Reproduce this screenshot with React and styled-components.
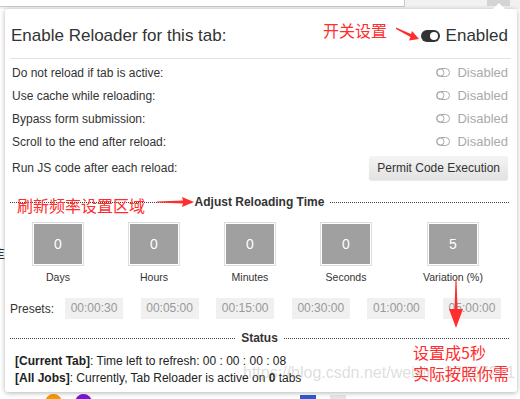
import React from "react";
import styled, { createGlobalStyle } from "styled-components";

const GlobalStyle = createGlobalStyle`
  html, body {
    margin: 0;
    padding: 0;
    background: #ffffff;
  }
  body {
    font-family: "Liberation Sans", Arial, sans-serif;
    color: #333;
  }
`;

const ToggleOn = () => (
  <svg width="19" height="12" viewBox="0 0 19 12">
    <rect x="0" y="0" width="19" height="12" rx="6" fill="#333" />
    <circle cx="13" cy="6" r="4" fill="#fff" />
  </svg>
);

const ToggleOff = () => (
  <svg width="14" height="9" viewBox="0 0 14 9">
    <rect x="0.5" y="0.5" width="13" height="8" rx="4" fill="none" stroke="#aaa" />
    <circle cx="4.5" cy="4.5" r="3.5" fill="none" stroke="#aaa" />
  </svg>
);

const options = [
  "Do not reload if tab is active:",
  "Use cache while reloading:",
  "Bypass form submission:",
  "Scroll to the end after reload:",
];

const timers = [
  { value: "0", label: "Days" },
  { value: "0", label: "Hours" },
  { value: "0", label: "Minutes" },
  { value: "0", label: "Seconds" },
  { value: "5", label: "Variation (%)" },
];

const presets = ["00:00:30", "00:05:00", "00:15:00", "00:30:00", "01:00:00", "05:00:00"];

const App = () => {
  return (
    <Page>
      <GlobalStyle />
      <Toolbar>
        <AddressBox />
        <ExtButton />
      </Toolbar>
      <EdgeGlyph>隹</EdgeGlyph>
      <BottomDots>
        <Dot color="#f59a00" left="45px" />
        <Dot color="#7a16d8" left="75px" />
        <Square color="#2d5bd0" left="300px" />
        <Square color="#e6e6e6" left="330px" />
      </BottomDots>

      <Popup>
        <Caret />
        <Header>
          <HeaderTitle>Enable Reloader for this tab:</HeaderTitle>
          <Switch>
            <ToggleOn />
            <span>Enabled</span>
          </Switch>
        </Header>

        <Options>
          {options.map((text) => (
            <Row key={text}>
              <RowLabel>{text}</RowLabel>
              <State>
                <ToggleOff />
                <span>Disabled</span>
              </State>
            </Row>
          ))}
          <ButtonRow>
            <RowLabel>Run JS code after each reload:</RowLabel>
            <PermitButton>Permit Code Execution</PermitButton>
          </ButtonRow>
        </Options>

        <Section>
          <Dotted />
          <SectionTitle>Adjust Reloading Time</SectionTitle>
          <Dotted />
        </Section>

        <Timers>
          {timers.map((t) => (
            <Timer key={t.label}>
              <TimeBox>{t.value}</TimeBox>
              <TimeLabel>{t.label}</TimeLabel>
            </Timer>
          ))}
        </Timers>

        <Presets>
          <PresetsLabel>Presets:</PresetsLabel>
          {presets.map((p) => (
            <Preset key={p}>{p}</Preset>
          ))}
        </Presets>

        <Section>
          <Dotted />
          <SectionTitle>Status</SectionTitle>
          <Dotted />
        </Section>

        <Status>
          <StatusLine>
            <b>[Current Tab]</b>: Time left to refresh: 00 : 00 : 00 : 08
          </StatusLine>
          <StatusLine>
            <b>[All Jobs]</b>: Currently, Tab Reloader is active on <b>0</b> tabs
          </StatusLine>
        </Status>

        <Note top="11px" left="318px">开关设置</Note>
        <ArrowSvg style={{ left: 391, top: 18 }} width="24" height="14" viewBox="0 0 24 14">
          <polygon points="0,0.5 15,7 16,4 23,12 13,13.5 14.5,10 0,2" fill="#ff2d2d" />
        </ArrowSvg>

        <Note top="186px" left="12px">刷新频率设置区域</Note>
        <ArrowSvg style={{ left: 152, top: 187 }} width="38" height="12" viewBox="0 0 38 12">
          <polygon points="0,5.5 26,4.5 25,1 37,6 25,11 26,7.5 0,6.5" fill="#ff2d2d" />
        </ArrowSvg>

        <ArrowSvg style={{ left: 442, top: 270 }} width="18" height="50" viewBox="0 0 18 50">
          <polygon points="8.5,0 9.5,0 10.5,30 16,30 9,49 2,30 7.5,30" fill="#ff2d2d" />
        </ArrowSvg>

        <Watermark>https://blog.csdn.net/weixin_37867251</Watermark>
        <Note top="333px" left="408px">设置成5秒</Note>
        <Note top="354px" left="408px">实际按照你需</Note>
      </Popup>
    </Page>
  );
};

export default App;

const Page = styled.div`
  position: relative;
  width: 520px;
  height: 399px;
  overflow: hidden;
  padding: 9px 3px 0 5px;
  box-sizing: border-box;
  background: #fff;
`;

const Toolbar = styled.div`
  position: absolute;
  top: 0;
  left: 0;
  right: 0;
  height: 9px;
  background: #f1f1f1;
`;

const AddressBox = styled.div`
  position: absolute;
  left: -2px;
  top: -2px;
  width: 405px;
  height: 7px;
  background: #fff;
  border: 1px solid #c8c8c8;
`;

const ExtButton = styled.div`
  position: absolute;
  left: 487px;
  top: 0;
  width: 23px;
  height: 6px;
  background: #d4d4d4;
`;

const EdgeGlyph = styled.div`
  position: absolute;
  left: -9px;
  top: 242px;
  font-family: "Noto Sans CJK SC", sans-serif;
  font-size: 14px;
  color: #333;
`;

const BottomDots = styled.div`
  position: absolute;
  left: 0;
  right: 0;
  top: 393px;
  height: 6px;
`;

const Dot = styled.div`
  position: absolute;
  top: 1px;
  left: ${(p) => p.left};
  width: 17px;
  height: 17px;
  border-radius: 50%;
  background: ${(p) => p.color};
`;

const Square = styled.div`
  position: absolute;
  top: 2px;
  left: ${(p) => p.left};
  width: 16px;
  height: 10px;
  background: ${(p) => p.color};
`;

const Popup = styled.div`
  position: relative;
  width: 512px;
  height: 383px;
  background: #fff;
  border-radius: 3px;
  box-shadow: 0 1px 5px rgba(0, 0, 0, 0.3);
  display: flex;
  flex-direction: column;
  z-index: 1;
`;

const Caret = styled.div`
  position: absolute;
  top: -6px;
  left: 488px;
  width: 0;
  height: 0;
  border-left: 6px solid transparent;
  border-right: 6px solid transparent;
  border-bottom: 6px solid #fff;
`;

const Header = styled.div`
  display: flex;
  align-items: center;
  justify-content: space-between;
  height: 44px;
  padding: 5px 9px 0 1px;
  margin: 0 6px 0 5px;
  border-bottom: 1px solid #e3e3e3;
`;

const HeaderTitle = styled.div`
  font-size: 17px;
  color: #333;
`;

const Switch = styled.div`
  display: flex;
  align-items: center;
  gap: 6px;
  font-size: 17px;
  color: #333;
  margin-right: -6px;
`;

const Options = styled.div`
  display: flex;
  flex-direction: column;
  padding: 2px 9px 0 7px;
`;

const Row = styled.div`
  display: flex;
  align-items: center;
  justify-content: space-between;
  height: 23px;
`;

const ButtonRow = styled(Row)`
  height: 30px;
`;

const RowLabel = styled.div`
  font-size: 12px;
  color: #333;
`;

const State = styled.div`
  display: flex;
  align-items: center;
  gap: 7px;
  font-size: 13px;
  color: #aaa;
`;

const PermitButton = styled.div`
  height: 24px;
  line-height: 24px;
  padding: 0 8px;
  font-size: 12px;
  color: #333;
  background: linear-gradient(#f4f4f4, #e2e2e2);
  border-radius: 2px;
  box-shadow: 0 1px 1px rgba(0, 0, 0, 0.08);
`;

const Section = styled.div`
  display: flex;
  align-items: center;
  gap: 6px;
  height: 20px;
  margin: 9px 8px 0 5px;
`;

const Dotted = styled.div`
  flex: 1;
  border-top: 1px dotted #444;
`;

const SectionTitle = styled.div`
  font-size: 12px;
  font-weight: bold;
  color: #333;
`;

const Timers = styled.div`
  display: grid;
  grid-template-columns: repeat(4, 96px) 118px;
  padding-left: 5px;
  margin-top: 11px;
`;

const Timer = styled.div`
  display: flex;
  flex-direction: column;
  align-items: center;
`;

const TimeBox = styled.div`
  width: 48px;
  height: 40px;
  display: flex;
  align-items: center;
  justify-content: center;
  background: #a0a0a0;
  border: 1px solid #fff;
  outline: 1px solid #dcdcdc;
  color: #fff;
  font-size: 14px;
`;

const TimeLabel = styled.div`
  margin-top: 6px;
  font-size: 10.5px;
  line-height: 13px;
  color: #333;
`;

const Presets = styled.div`
  display: flex;
  align-items: center;
  margin-top: 14px;
  padding-left: 5px;
  gap: 17.6px;
`;

const PresetsLabel = styled.div`
  width: 55px;
  margin-right: -17.6px;
  font-size: 12px;
  color: #333;
`;

const Preset = styled.div`
  width: 58px;
  height: 21px;
  line-height: 21px;
  text-align: center;
  background: #f0f0f0;
  color: #999;
  font-size: 12px;
`;

const Status = styled.div`
  display: flex;
  flex-direction: column;
  padding: 5px 0 0 10px;
`;

const StatusLine = styled.div`
  height: 17px;
  line-height: 17px;
  font-size: 12px;
  color: #222;
`;

const Note = styled.div`
  position: absolute;
  top: ${(p) => p.top};
  left: ${(p) => p.left};
  font-family: "Noto Sans CJK SC", sans-serif;
  font-size: 16px;
  line-height: 20px;
  color: #ff2d2d;
  white-space: nowrap;
  z-index: 3;
`;

const ArrowSvg = styled.svg`
  position: absolute;
  z-index: 3;
`;

const Watermark = styled.div`
  position: absolute;
  left: 238px;
  top: 354px;
  font-size: 16px;
  line-height: 20px;
  color: rgba(170, 170, 170, 0.4);
  white-space: nowrap;
  z-index: 2;
  pointer-events: none;
`;
